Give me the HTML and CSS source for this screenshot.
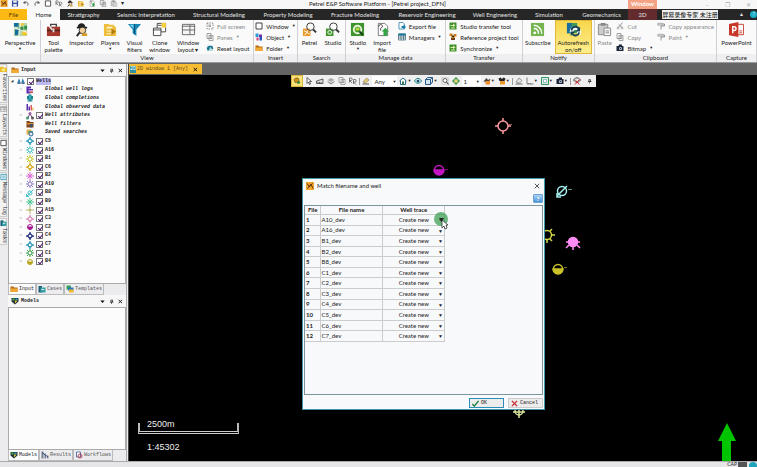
FILE: index.html
```html
<!DOCTYPE html>
<html lang="en">
<head>
    <meta charset="UTF-8">
    <meta name="viewport" content="width=device-width, initial-scale=1.0">
    <title>Petrel E&amp;P Software Platform - [Petrel project_DFN]</title>
    <link rel="stylesheet" href="styles.css">
</head>
<body>
    <svg class="sprite" aria-hidden="true">
        <!-- ribbon -->
        <symbol id="i-persp" viewBox="0 0 16 16"><path fill="#b9d7a0" d="M1 1h14v14H1z"/><path fill="#176f9d" d="M1 1h5v4H1zM2 8h4v6H2z"/><path fill="#f3c62f" d="M7 1h4v3H7zM10 10h5v4h-5z"/><path fill="#2e8b4c" d="M6 5h5v4H6zM12 4h3v4h-3z"/><path stroke="#fff" d="M1 6l14 5M8 1l-2 14"/></symbol>
        <symbol id="i-tool" viewBox="0 0 16 16"><path fill="none" stroke="#444" stroke-width="1.5" d="M5 5V2.500h6V5"/><rect x="1" y="5" width="14" height="10" fill="#a8382d"/><path fill="#5b2520" d="M1 8h14v2H1z"/><path fill="#ddd" d="M7 7h2v4H7zM3 5l3 4 1-1-2-4z"/></symbol>
        <symbol id="i-insp" viewBox="0 0 16 16"><path fill="#222" d="M4 5c0-5 8-5 8 0h2v2H3V5z"/><circle cx="9" cy="9" r="3.500" fill="#f1cf9b" stroke="#333"/><path stroke="#222" stroke-width="2" d="M6 11l-3 4"/><path fill="#d49c22" d="M9 12h5v3H8z"/></symbol>
        <symbol id="i-play" viewBox="0 0 16 16"><path fill="#eebd3b" d="M1 2h5l1 1h4l3 3v9H1z"/><path fill="#fff3c9" d="M4 5h6v2H4zM4 9h7v1H4zM4 12h7v1H4z"/><path fill="#b37b10" d="M9 7l5 3-5 4z"/></symbol>
        <symbol id="i-filter" viewBox="0 0 16 16"><path fill="#1688b5" d="M1 2h14l-5 6v7l-4-3V8z"/><path fill="#7bd0e8" d="M3 3h4v4z"/><path stroke="#0a4d72" d="M8 2v11"/></symbol>
        <symbol id="i-clone" viewBox="0 0 16 16"><path fill="#fff" stroke="#444" d="M5.500 1.500h9v9h-9z"/><path fill="#f3d03e" d="M10 1h5v5h-5z"/><path fill="#fff" stroke="#444" d="M1.500 6.500h8v8h-8z"/><path stroke="#444" d="M1 8.500h9M6 3.500h4"/></symbol>
        <symbol id="i-layout" viewBox="0 0 16 16"><path fill="#f6f6f6" stroke="#666" d="M1.500 2.500h13v11h-13zM1 8.500h14M9.500 3v10M1 4.500h14"/></symbol>
        <symbol id="i-full" viewBox="0 0 16 16"><path fill="none" stroke="#666" stroke-width="1.500" stroke-dasharray="3 2" d="M2 2h12v12H2z"/><path fill="#aaa" d="M5 5h5v5H5z"/></symbol>
        <symbol id="i-reset" viewBox="0 0 16 16"><path fill="#b8dbe0" d="M2 3h12v11H2z"/><path fill="none" stroke="#14708c" stroke-width="3" d="M4 10c0-7 9-7 9 0"/><path fill="#14708c" d="M1 7l7 1-4 6z"/></symbol>
        <symbol id="i-win" viewBox="0 0 16 16"><path fill="#fff" stroke="#444" stroke-width="2" d="M2 2h12v12H2z"/></symbol>
        <symbol id="i-obj" viewBox="0 0 16 16"><path fill="#2e9bd6" d="M1 1h6v7H1z"/><path fill="#6d33a8" d="M8 3h6v5H8z"/><path fill="#d83b7d" d="M3 9h4v6H3z"/><path fill="#2457b5" d="M9 8h5v7H9z"/></symbol>
        <symbol id="i-folder" viewBox="0 0 16 16"><path fill="#b46a14" d="M1 3h6l1 2h7v9H1z"/><path fill="#f3aa35" d="M1 7h14v7H1z"/></symbol>
        <symbol id="i-search" viewBox="0 0 16 16"><path fill="#eb972b" d="M1 7h8v8H1z"/><path stroke="#fff" d="M2 9l6 4M7 8l-4 6"/><circle cx="9" cy="5" r="4" fill="#fff" fill-opacity=".5" stroke="#333"/><path stroke="#333" stroke-width="2" d="M12 8l3 3"/></symbol>
        <symbol id="i-ssearch" viewBox="0 0 16 16"><path fill="#44962f" d="M1 7h8v8H1z"/><circle cx="5" cy="11" r="2" fill="none" stroke="#fff"/><circle cx="9" cy="5" r="4" fill="#fff" fill-opacity=".5" stroke="#333"/><path stroke="#333" stroke-width="2" d="M12 8l3 3"/></symbol>
        <symbol id="i-studio" viewBox="0 0 16 16"><rect x="1" y="1" width="14" height="14" fill="#3f942f"/><circle cx="8" cy="8" r="4" fill="none" stroke="#e9f5d8" stroke-width="2"/><path stroke="#173d13" stroke-width="2" d="M10 10l4 4"/><path fill="#b9da42" d="M6 6h4v3H6z"/></symbol>
        <symbol id="i-import" viewBox="0 0 16 16"><path fill="#fff" stroke="#777" d="M3.500 1.500h7l3 3v10h-10z"/><path fill="#37a447" d="M11 6l4 4h-2v5H9v-5H7z"/><path fill="none" stroke="#333" d="M4 5c0-3 4-3 4 0L6 7v2"/></symbol>
        <symbol id="i-export" viewBox="0 0 16 16"><path fill="#fff" stroke="#257aa0" stroke-width="1.500" d="M2 1h8l3 3v10H2z"/><path fill="#197fae" d="M7 8h4V5l5 5-5 5v-3H7z"/></symbol>
        <symbol id="i-table" viewBox="0 0 16 16"><path fill="#fff" stroke="#3b6776" stroke-width="1.500" d="M1 2h14v12H1zM1 6h14M1 10h14M6 2v12M11 2v12"/><path fill="#18799a" d="M1 1h14v4H1z"/></symbol>
        <symbol id="i-green" viewBox="0 0 16 16"><rect x="1" y="1" width="14" height="14" fill="#418f2e"/><path fill="#dcefa6" d="M3 6h5V3l5 4-5 3V8H3zM4 11h8v2H4z"/></symbol>
        <symbol id="i-ref" viewBox="0 0 16 16"><path fill="#cf7d20" d="M1 1h6v5H1zM9 2h6v5H9z"/><path fill="#713b1c" d="M4 9h8v5H4z"/><path stroke="#d99a27" stroke-width="2" d="M4 5l4 5 4-4"/></symbol>
        <symbol id="i-rss" viewBox="0 0 16 16"><rect x="1" y="1" width="14" height="14" fill="#74b551"/><circle cx="5" cy="11.500" r="1.500" fill="#fff"/><path fill="none" stroke="#fff" stroke-width="1.500" d="M4 7c3 0 5 2 5 5.500M4 3.500c5 0 8.500 4 8.500 9"/></symbol>
        <symbol id="i-refresh" viewBox="0 0 16 16"><rect x="1" y="1" width="11" height="11" fill="#3e9a54"/><path fill="#196fa0" d="M1 1h5v11H1z"/><path fill="none" stroke="#fff" stroke-width="4" d="M6 11a4 4 0 1 1 7 2"/><path fill="none" stroke="#164355" stroke-width="2" d="M6 9a4 4 0 0 1 8 0M14 11a4 4 0 0 1-7 2"/><path fill="#164355" d="M15 5v5h-5zM5 15v-5h5z"/></symbol>
        <symbol id="i-paste" viewBox="0 0 16 16"><path fill="#ccc" stroke="#888" d="M1.500 2.500h10v11h-10z"/><path fill="#888" d="M4 1h5v3H4z"/><path fill="#f8f8f8" stroke="#888" d="M7.500 6.500h7v8h-7zM9 9.500h4M9 11.500h4"/></symbol>
        <symbol id="i-cut" viewBox="0 0 16 16"><path fill="none" stroke="#777" stroke-width="1.500" d="M13 1L5 11M6 5l6 6"/><circle cx="4" cy="12" r="2" fill="none" stroke="#777"/><circle cx="12" cy="12" r="2" fill="none" stroke="#777"/></symbol>
        <symbol id="i-copy" viewBox="0 0 16 16"><path fill="#f5f5f5" stroke="#888" stroke-width="1.500" d="M2 1h8v10H2zM6 5h8v10H6zM8 8h4M8 11h4"/></symbol>
        <symbol id="i-camera" viewBox="0 0 16 16"><path fill="#1b2438" d="M1 4h4l1-3h6v3h3v10H1z"/><circle cx="9" cy="9" r="3" fill="#d7e5f2"/><circle cx="9" cy="9" r="1.500" fill="#1b2438"/></symbol>
        <symbol id="i-brush" viewBox="0 0 16 16"><path fill="#ccc" stroke="#888" d="M1.500 2.500h11v4h-11z"/><path fill="none" stroke="#777" stroke-width="1.500" d="M13 4h2v4H8v7"/></symbol>
        <symbol id="i-ppt" viewBox="0 0 16 16"><path fill="#fff" stroke="#c84132" d="M7.500 2.500h8v11h-8z"/><path fill="#c83828" d="M0 2l10-2v16L0 14z"/><path fill="none" stroke="#fff" stroke-width="1.500" d="M4 12V5h1.500a2 2 0 0 1 0 4H4"/><path stroke="#c84132" d="M11 9.500h3M11 11.500h3"/></symbol>
        <!-- small bits -->
        <symbol id="i-petrel" viewBox="0 0 16 16"><rect width="16" height="16" fill="#f1a32c"/><path fill="none" stroke="#5d3511" stroke-width="2" d="M2 3l5 7 3-6 4 9M3 13l4-5 6-5"/></symbol>
        <symbol id="i-save" viewBox="0 0 16 16"><path fill="#344f9d" d="M1 1h13l1 2v12H1z"/><path fill="#eee" d="M4 1h8v5H4zM4 9h8v6H4z"/></symbol>
        <symbol id="i-undo" viewBox="0 0 16 16"><path fill="none" stroke="#555" stroke-width="2" d="M3 6c8-4 11 1 9 7"/><path fill="#555" d="M1 7l5-5 1 7z"/></symbol>
        <symbol id="i-redo" viewBox="0 0 16 16"><path fill="none" stroke="#555" stroke-width="2" d="M13 6C5 2 2 7 4 13"/><path fill="#555" d="M15 7l-5-5-1 7z"/></symbol>
        <symbol id="i-pin" viewBox="0 0 16 16"><path fill="#222" d="M5 2h7v7h2v2H9v5H7v-5H3V9h2z"/><path fill="#eee" d="M7 4h2v5H7z"/></symbol>
        <symbol id="i-x" viewBox="0 0 16 16"><path stroke="#111" stroke-width="3" d="M2 3l11 10M13 3L2 13"/></symbol>
        <symbol id="i-thinx" viewBox="0 0 16 16"><path stroke="currentColor" stroke-width="2" d="M2 2l12 12M14 2L2 14"/></symbol>
        <symbol id="i-down" viewBox="0 0 16 16"><path fill="#111" d="M1 5h14l-7 8z"/></symbol>
        <!-- tree -->
        <symbol id="i-wells" viewBox="0 0 20 16"><path fill="#2a7fb4" d="M5 1l4 11H1zM14 1l5 11h-8z"/><path fill="#173f7c" d="M1 12h8v3H1zM11 12h8v3h-8z"/></symbol>
        <symbol id="i-logs" viewBox="0 0 16 16"><path fill="#5b2bb0" d="M1 1h4v14H1zM5 1h5v4H5zM5 6h9v3H5zM5 11h4v4H5z"/><path fill="#d4443d" d="M7 11h7v3H7z"/></symbol>
        <symbol id="i-comp" viewBox="0 0 16 16"><path fill="#188494" d="M5 1h6v3h3v7h-3v2h2v2H3v-2h2v-2H2V4h3z"/><path fill="#51c4cd" d="M7 3h2v8H7z"/></symbol>
        <symbol id="i-obs" viewBox="0 0 16 16"><path fill="#5b33a8" d="M1 2h3v13H1zM5 7h3v8H5z"/><path fill="#dd5b68" d="M9 4h3v11H9z"/><path fill="#e9a62d" d="M13 9h2v6h-2z"/></symbol>
        <symbol id="i-attr" viewBox="0 0 16 16"><path fill="none" stroke="#6a4d7c" stroke-width="2" d="M3 13L8 3l5 10"/><circle cx="8" cy="3" r="3" fill="#9b59a8"/><circle cx="3" cy="12" r="3" fill="#40946e"/><circle cx="13" cy="12" r="3" fill="#555"/></symbol>
        <symbol id="i-wfil" viewBox="0 0 16 16"><path fill="#82431f" d="M1 2h6l1 2h7v11H1z"/><path fill="#d79337" d="M1 6h14v3H1z"/><path fill="#35547d" d="M7 8h8l-3 4v3H9v-3z"/></symbol>
        <symbol id="i-saved" viewBox="0 0 16 16"><path fill="#e5b04a" d="M1 1h10v10H1z"/><path fill="#4a9f8a" d="M4 4h10v3H4z"/><circle cx="10" cy="10" r="4" fill="#dff1fa" stroke="#315f8a" stroke-width="2"/></symbol>
        <symbol id="w-diamond" viewBox="0 0 16 16"><path fill="none" stroke="currentColor" stroke-width="2.500" d="M8 3l5 5-5 5-5-5zM8 0v3M8 13v3M0 8h3M13 8h3"/></symbol>
        <symbol id="w-ring" viewBox="0 0 16 16"><circle cx="8" cy="8" r="4" fill="none" stroke="currentColor" stroke-width="2"/><path stroke="currentColor" stroke-width="2" d="M8 0v4M8 12v4M0 8h4M12 8h4M2 2l3 3M14 2l-3 3M2 14l3-3M14 14l-3-3"/></symbol>
        <symbol id="w-star" viewBox="0 0 16 16"><path stroke="currentColor" stroke-width="2" d="M8 0v16M0 8h16M3 3l10 10M13 3L3 13"/></symbol>
        <symbol id="w-half" viewBox="0 0 16 16"><circle cx="8" cy="8" r="5" fill="#fff" fill-opacity=".5" stroke="currentColor" stroke-width="2"/><path fill="currentColor" d="M3 7h10a5 6 0 0 1-10 0z"/></symbol>
        <symbol id="w-slash" viewBox="0 0 16 16"><circle cx="8" cy="8" r="4" fill="none" stroke="currentColor" stroke-width="2"/><path stroke="currentColor" stroke-width="2" d="M1 15L15 1M1 10v5h5"/></symbol>
        <symbol id="w-cross" viewBox="0 0 16 16"><path stroke="currentColor" stroke-width="2" d="M8 0v16M0 8h16"/><circle cx="8" cy="8" r="2" fill="currentColor"/></symbol>
        <symbol id="i-models" viewBox="0 0 16 16"><path fill="#20343a" d="M1 2h14v7l-7 6-7-6z"/><path fill="#4db34a" d="M3 3h4v4H3z"/><path fill="#e5ce36" d="M8 7h5l-5 6z"/><path fill="#2b9bc5" d="M9 3h4v3H9z"/></symbol>
        <symbol id="i-cases" viewBox="0 0 16 16"><path fill="#235f78" d="M1 2h7v13H1z"/><path fill="#36a1a6" d="M5 5h10v10H5z"/><path fill="#e0efea" d="M7 8h5v2H7z"/></symbol>
        <symbol id="i-templ" viewBox="0 0 16 16"><path fill="#35a355" d="M1 1h9v8H1z"/><path fill="#2678bb" d="M4 5h11v6H4z"/><path fill="#efb629" d="M6 9h9v6H6z"/></symbol>
        <symbol id="i-results" viewBox="0 0 16 16"><path fill="#7a7f94" d="M1 1h4v14H1zM7 5h3v10H7zM12 9h3v6h-3z"/><path stroke="#3a517f" stroke-width="2" d="M2 3l12 9"/></symbol>
        <symbol id="i-flow" viewBox="0 0 16 16"><path fill="#fff" stroke="#5679a5" stroke-width="2" d="M3 2h8v10H3z"/><circle cx="10" cy="10" r="4" fill="none" stroke="#c23d55" stroke-width="2"/></symbol>
        <symbol id="i-note" viewBox="0 0 16 16"><path fill="#fff" stroke="#3b9cb5" stroke-width="2" d="M2 2h12v12H2zM5 6h6M5 10h6"/></symbol>
        <symbol id="i-favs" viewBox="0 0 16 16"><path fill="#e9bd2c" d="M0 3h7l2 2h7v10H0z"/><path fill="#fff2a2" d="M8 5l1 3h4l-3 2 1 4-3-2-3 2 1-4-3-2h4z"/></symbol>
        <!-- view toolbar -->
        <symbol id="i-hand" viewBox="0 0 16 16"><path fill="#d68d16" stroke="#3d3a14" d="M2 5l3-3h5l2 4v5H4z"/><path fill="#2f8b35" d="M8 9h3V7l4 4-4 4v-2H8z"/></symbol>
        <symbol id="i-arrow" viewBox="0 0 16 16"><path fill="#fff" stroke="#333" stroke-width="1.500" d="M4 1v12l3-3 2 5 2-1-2-5h4z"/></symbol>
        <symbol id="i-ruler" viewBox="0 0 16 16"><path fill="#ddd" stroke="#333" stroke-width="1.500" d="M1 13V8l13-4v9zM4 12v-2M7 12v-2M10 12v-2"/></symbol>
        <symbol id="i-cloud" viewBox="0 0 16 16"><path fill="#aaa" d="M1 6l7-4 7 4-7 4z"/><path fill="#888" d="M1 8l7 4 7-4v2l-7 5-7-5z"/></symbol>
        <symbol id="i-rr" viewBox="0 0 16 16"><path fill="none" stroke="#555" stroke-width="1.500" d="M1 11V2h3a2 2 0 0 1 0 5H1l5 5M9 14V5h3a2 2 0 0 1 0 5H9l5 5"/></symbol>
        <symbol id="i-pick" viewBox="0 0 16 16"><path fill="#e8ca70" stroke="#665a3e" d="M2 10l7-8 5 4-7 6z"/><path stroke="#555" stroke-width="2" d="M1 14h13"/></symbol>
        <symbol id="i-edit" viewBox="0 0 16 16"><path fill="#e4e4e4" stroke="#777" stroke-width="1.500" d="M2 10l6-8 6 5-5 5z"/><path stroke="#666" stroke-width="2" d="M1 14h14"/></symbol>
        <symbol id="i-home" viewBox="0 0 16 16"><path fill="#fff" stroke="#266b83" stroke-width="2" d="M1 8l7-6 7 6M3 7v8h10V7"/><path fill="#3b7d57" d="M6 9h4v6H6z"/></symbol>
        <symbol id="i-eye" viewBox="0 0 16 16"><path fill="#fff" stroke="#137d80" stroke-width="2" d="M1 8c4-7 10-7 14 0-4 6-10 6-14 0z"/><circle cx="8" cy="8" r="3" fill="#174c6b"/></symbol>
        <symbol id="i-cube" viewBox="0 0 16 16"><path fill="#d5e7f2" stroke="#285884" stroke-width="2" d="M1 5h10v10H1zM1 5l4-4h10l-4 4M15 1v9l-4 5"/></symbol>
        <symbol id="i-zoom" viewBox="0 0 16 16"><path fill="none" stroke="#888" stroke-dasharray="2 1" d="M1.500 1.500h13v13h-13z"/><circle cx="8" cy="7" r="4" fill="#fff" stroke="#333" stroke-width="1.500"/><path stroke="#333" stroke-width="2" d="M11 10l4 5"/></symbol>
        <symbol id="i-target" viewBox="0 0 16 16"><circle cx="8" cy="8" r="5" fill="#e7edbe" stroke="#3a8b3f" stroke-width="2"/><path stroke="#3a8b3f" stroke-width="2" d="M8 0v5M8 11v5M0 8h5M11 8h5"/><circle cx="8" cy="8" r="2" fill="#f1bd30"/></symbol>
        <symbol id="i-bird" viewBox="0 0 16 16"><path fill="#4b4136" d="M1 9l6-7 3 4 5-3-3 8z"/><path fill="#ed8d2d" d="M5 8h9v7H5z"/></symbol>
        <symbol id="i-mask" viewBox="0 0 16 16"><path fill="#222" d="M1 3l4-2 3 3 3-3 4 2-2 5H3z"/><path fill="#ed982f" d="M4 8h10v7H4z"/></symbol>
        <symbol id="i-axis" viewBox="0 0 16 16"><path fill="none" stroke="#555" stroke-width="1.500" d="M2 1v13h13M5 12v2M9 12v2"/></symbol>
        <symbol id="i-frame" viewBox="0 0 16 16"><path fill="#dff1e3" stroke="#329162" stroke-width="2" d="M1 1h14v14H1z"/><path fill="#fff" stroke="#357e9b" d="M5 5h6v6H5z"/></symbol>
        <symbol id="i-off" viewBox="0 0 16 16"><path fill="#ddd" stroke="#555" stroke-width="2" d="M1 6c4-6 10-6 14 0-4 6-10 6-14 0z"/><path stroke="#c33" stroke-width="2" d="M4 15l9-10M5 7l8 8"/></symbol>
    </svg>

    <div class="app">
        <header class="titlebar">
            <div class="quick">
                <svg class="ic"><use href="#i-petrel"/></svg>
                <svg class="ic"><use href="#i-save"/></svg>
                <svg class="ic"><use href="#i-undo"/></svg>
                <svg class="ic"><use href="#i-redo"/></svg>
                <svg class="ic"><use href="#i-win"/></svg>
                <svg class="ic"><use href="#i-rr"/></svg>
                <svg class="ic"><use href="#i-insp"/></svg>
                <svg class="ic"><use href="#i-play"/></svg>
                <svg class="ic"><use href="#i-import"/></svg>
                <svg class="ic"><use href="#i-copy"/></svg>
                <svg class="ic"><use href="#i-paste"/></svg>
                <span>▾</span>
            </div>
            <h1>Petrel E&amp;P Software Platform - [Petrel project_DFN]</h1>
            <span class="context">Window</span>
            <div class="win-btns"><button aria-label="Minimize">–</button><button aria-label="Restore">❐</button><button aria-label="Close">✕</button></div>
        </header>

        <nav class="tabs">
            <a href="#" class="file">File</a>
            <a href="#" class="active">Home</a>
            <a href="#">Stratigraphy</a>
            <a href="#">Seismic Interpretation</a>
            <a href="#">Structural Modeling</a>
            <a href="#">Property Modeling</a>
            <a href="#">Fracture Modeling</a>
            <a href="#">Reservoir Engineering</a>
            <a href="#">Well Engineering</a>
            <a href="#">Simulation</a>
            <a href="#">Geomechanics</a>
            <a href="#" class="red">2D</a>
            <span class="stamp"><b>屏幕录像专家 未注册</b></span>
            <span class="tab-end">▲<i>?</i></span>
        </nav>

        <section class="ribbon">
            <div class="group">
                <div class="tools"><button class="big"><svg><use href="#i-persp"/></svg>Perspective<small>▼</small></button></div>
                <h2></h2>
            </div>
            <div class="group">
                <div class="tools">
                    <button class="big"><svg><use href="#i-tool"/></svg>Tool<br>palette</button>
                    <button class="big"><svg><use href="#i-insp"/></svg>Inspector</button>
                    <button class="big"><svg><use href="#i-play"/></svg>Players<small>▼</small></button>
                    <button class="big"><svg><use href="#i-filter"/></svg>Visual<br>filters</button>
                    <button class="big"><svg><use href="#i-clone"/></svg>Clone<br>window</button>
                    <button class="big"><svg><use href="#i-layout"/></svg>Window<br>layout ▾</button>
                    <div class="list">
                        <button class="dim"><svg><use href="#i-full"/></svg>Full screen</button>
                        <button class="dim"><svg><use href="#i-copy"/></svg>Panes<small>▼</small></button>
                        <button><svg><use href="#i-reset"/></svg>Reset layout</button>
                    </div>
                </div>
                <h2>View</h2>
            </div>
            <div class="group">
                <div class="tools"><div class="list">
                    <button><svg><use href="#i-win"/></svg>Window<small>▼</small></button>
                    <button><svg><use href="#i-obj"/></svg>Object<small>▼</small></button>
                    <button><svg><use href="#i-folder"/></svg>Folder<small>▼</small></button>
                </div></div>
                <h2>Insert</h2>
            </div>
            <div class="group">
                <div class="tools">
                    <button class="big"><svg><use href="#i-search"/></svg>Petrel</button>
                    <button class="big"><svg><use href="#i-ssearch"/></svg>Studio</button>
                </div>
                <h2>Search</h2>
            </div>
            <div class="group">
                <div class="tools">
                    <button class="big"><svg><use href="#i-studio"/></svg>Studio<small>▼</small></button>
                    <button class="big"><svg><use href="#i-import"/></svg>Import<br>file</button>
                    <div class="list">
                        <button><svg><use href="#i-export"/></svg>Export file</button>
                        <button><svg><use href="#i-table"/></svg>Managers<small>▼</small></button>
                    </div>
                </div>
                <h2>Manage data</h2>
            </div>
            <div class="group">
                <div class="tools"><div class="list">
                    <button><svg><use href="#i-green"/></svg>Studio transfer tool</button>
                    <button><svg><use href="#i-ref"/></svg>Reference project tool</button>
                    <button><svg><use href="#i-green"/></svg>Synchronize<small>▼</small></button>
                </div></div>
                <h2>Transfer</h2>
            </div>
            <div class="group">
                <div class="tools">
                    <button class="big"><svg><use href="#i-rss"/></svg>Subscribe</button>
                    <button class="big on"><svg><use href="#i-refresh"/></svg>Autorefresh<br>on/off</button>
                </div>
                <h2>Notify</h2>
            </div>
            <div class="group">
                <div class="tools">
                    <button class="big dim"><svg><use href="#i-paste"/></svg>Paste</button>
                    <div class="list">
                        <button class="dim"><svg><use href="#i-cut"/></svg>Cut</button>
                        <button class="dim"><svg><use href="#i-copy"/></svg>Copy</button>
                        <button><svg><use href="#i-camera"/></svg>Bitmap<small>▼</small></button>
                    </div>
                    <div class="list">
                        <button class="dim"><svg><use href="#i-brush"/></svg>Copy appearance</button>
                        <button class="dim"><svg><use href="#i-brush"/></svg>Paint<small>▼</small></button>
                    </div>
                </div>
                <h2>Clipboard</h2>
            </div>
            <div class="group">
                <div class="tools"><button class="big"><svg><use href="#i-ppt"/></svg>PowerPoint</button></div>
                <h2>Capture</h2>
            </div>
        </section>

        <main class="work">
            <nav class="side">
                <a href="#"><svg class="ic"><use href="#i-favs"/></svg>Favorites</a>
                <a href="#"><svg class="ic"><use href="#i-layout"/></svg>Layouts</a>
                <a href="#"><svg class="ic"><use href="#i-win"/></svg>Windows</a>
                <a href="#"><svg class="ic"><use href="#i-note"/></svg>Message log</a>
                <a href="#"><svg class="ic"><use href="#i-cases"/></svg>Tasks</a>
            </nav>

            <div class="panels">
                <section class="panel input">
                    <h3><svg class="ic"><use href="#i-folder"/></svg>Input<span><svg><use href="#i-down"/></svg><svg><use href="#i-pin"/></svg><svg><use href="#i-x"/></svg></span></h3>
                    <div class="box">
                        <ul class="tree">
                            <li class="root"><i>◢</i><svg class="ic"><use href="#i-wells"/></svg><label><input type="checkbox" checked><b>Wells</b></label></li>
                            <li class="it"><i>▷</i><svg class="ic"><use href="#i-logs"/></svg><span>Global well logs</span></li>
                            <li class="it"><i></i><svg class="ic"><use href="#i-comp"/></svg><span>Global completions</span></li>
                            <li class="it"><i></i><svg class="ic"><use href="#i-obs"/></svg><span>Global observed data</span></li>
                            <li class="it"><i>▷</i><svg class="ic"><use href="#i-attr"/></svg><label><input type="checkbox" checked>Well attributes</label></li>
                            <li class="it"><i></i><svg class="ic"><use href="#i-wfil"/></svg><span>Well filters</span></li>
                            <li class="it"><i></i><svg class="ic"><use href="#i-saved"/></svg><span>Saved searches</span></li>
                            <li><i>▷</i><svg class="ic cyan"><use href="#w-diamond"/></svg><label><input type="checkbox" checked>C5</label></li>
                            <li><i>▷</i><svg class="ic aqua"><use href="#w-ring"/></svg><label><input type="checkbox" checked>A16</label></li>
                            <li><i>▷</i><svg class="ic lime"><use href="#w-ring"/></svg><label><input type="checkbox" checked>B1</label></li>
                            <li><i>▷</i><svg class="ic gold"><use href="#w-diamond"/></svg><label><input type="checkbox" checked>C6</label></li>
                            <li><i>▷</i><svg class="ic orchid"><use href="#w-star"/></svg><label><input type="checkbox" checked>B2</label></li>
                            <li><i>▷</i><svg class="ic violet"><use href="#w-ring"/></svg><label><input type="checkbox" checked>A10</label></li>
                            <li><i>▷</i><svg class="ic aqua"><use href="#w-slash"/></svg><label><input type="checkbox" checked>B8</label></li>
                            <li><i>▷</i><svg class="ic mint"><use href="#w-star"/></svg><label><input type="checkbox" checked>B9</label></li>
                            <li><i>▷</i><svg class="ic khaki"><use href="#w-cross"/></svg><label><input type="checkbox" checked>A15</label></li>
                            <li><i>▷</i><svg class="ic pink"><use href="#w-diamond"/></svg><label><input type="checkbox" checked>C3</label></li>
                            <li><i>▷</i><svg class="ic magenta"><use href="#w-half"/></svg><label><input type="checkbox" checked>C2</label></li>
                            <li><i>▷</i><svg class="ic navy"><use href="#w-diamond"/></svg><label><input type="checkbox" checked>C4</label></li>
                            <li><i>▷</i><svg class="ic cyan"><use href="#w-diamond"/></svg><label><input type="checkbox" checked>C7</label></li>
                            <li><i>▷</i><svg class="ic green"><use href="#w-ring"/></svg><label><input type="checkbox" checked>C1</label></li>
                            <li><i>▷</i><svg class="ic olive"><use href="#w-half"/></svg><label><input type="checkbox" checked>B4</label></li>
                        </ul>
                    </div>
                    <nav class="foot"><a href="#" class="active"><svg class="ic"><use href="#i-folder"/></svg>Input</a><a href="#"><svg class="ic"><use href="#i-cases"/></svg>Cases</a><a href="#"><svg class="ic"><use href="#i-templ"/></svg>Templates</a></nav>
                </section>
                <section class="panel models">
                    <h3><svg class="ic"><use href="#i-models"/></svg>Models<span><svg><use href="#i-down"/></svg><svg><use href="#i-pin"/></svg><svg><use href="#i-x"/></svg></span></h3>
                    <div class="box"></div>
                    <nav class="foot"><a href="#" class="active"><svg class="ic"><use href="#i-models"/></svg>Models</a><a href="#"><svg class="ic"><use href="#i-results"/></svg>Results</a><a href="#"><svg class="ic"><use href="#i-flow"/></svg>Workflows</a></nav>
                </section>
            </div>

            <div class="view">
                <div class="view-tabs"><a href="#"><em>2D</em>2D window 1 [Any]<svg><use href="#i-x"/></svg></a></div>
                <div class="canvas">
                    <svg class="map">
                        <g fill="none" stroke-width="1.500">
                            <g stroke="#ff9aa0"><circle cx="374" cy="51" r="5"/><path d="M374 43v3M374 56v3M366 51h3M379 51h3"/><path stroke-width="1" stroke-opacity=".6" d="M380 49.500h3"/></g>
                            <g stroke="#c414c4"><circle cx="310" cy="95" r="4.500"/><path fill="#c414c4" d="M305 95h10a5 5 0 0 1-10 0z"/><path stroke-width="1" stroke-opacity=".6" d="M316 94.500h3"/></g>
                            <g stroke="#a5eef0"><circle cx="433" cy="116" r="4.500"/><path d="M428 121l10-10M428 118v4h4"/><path stroke-width="1" stroke-opacity=".6" d="M439 114.500h4"/></g>
                            <g stroke="#d3d64a"><circle cx="418" cy="160" r="4.500"/><path d="M421 156l2-2M423 160h3M421 164l2 2M418 165v3"/></g>
                            <g stroke="#ff8cf5"><circle cx="444" cy="167" r="4.500" fill="#ff8cf5"/><path d="M437 167h14M444 171v4M440 170l-3 3M448 170l3 3"/></g>
                            <g stroke="#c9c128"><circle cx="429" cy="194" r="4.500"/><path fill="#c9c128" d="M424 194h10a5 5 0 0 1-10 0z"/><path stroke-width="1" stroke-opacity=".6" d="M435 192.500h3"/></g>
                            <g stroke="#dbe59c"><circle cx="390" cy="336" r="4"/><path d="M390 332v11M384 337h12"/></g>
                        </g>
                    </svg>
                    <div class="toolbar">
                        <button class="on" aria-label="Pan"><svg><use href="#i-hand"/></svg></button>
                        <button aria-label="Select"><svg><use href="#i-arrow"/></svg></button>
                        <button aria-label="Measure"><svg><use href="#i-ruler"/></svg></button>
                        <button aria-label="Surface"><svg><use href="#i-cloud"/></svg></button>
                        <button aria-label="Copy"><svg><use href="#i-copy"/></svg></button>
                        <button aria-label="Rotate"><svg><use href="#i-rr"/></svg></button>
                        <hr>
                        <button aria-label="Pick"><svg><use href="#i-pick"/></svg></button>
                        <div class="combo"><select aria-label="Domain"><option>Any</option></select></div>
                        <button aria-label="Home view"><svg><use href="#i-home"/></svg><small>▼</small></button>
                        <button aria-label="View all"><svg><use href="#i-eye"/></svg></button>
                        <button aria-label="Projection"><svg><use href="#i-cube"/></svg><small>▼</small></button>
                        <button aria-label="Zoom"><svg><use href="#i-zoom"/></svg></button>
                        <button aria-label="Center"><svg><use href="#i-target"/></svg></button>
                        <div class="combo"><select aria-label="Scale" class="short"><option>1</option></select></div>
                        <button aria-label="Flight"><svg><use href="#i-bird"/></svg><small>▼</small></button>
                        <button aria-label="Mask"><svg><use href="#i-mask"/></svg><small>▼</small></button>
                        <hr>
                        <button aria-label="Edit"><svg><use href="#i-edit"/></svg></button>
                        <button aria-label="Axis"><svg><use href="#i-axis"/></svg><small>▼</small></button>
                        <button aria-label="Frame"><svg><use href="#i-frame"/></svg><small>▼</small></button>
                        <button aria-label="Snapshot"><svg><use href="#i-camera"/></svg><small>▼</small></button>
                        <hr>
                        <button aria-label="Hide"><svg><use href="#i-off"/></svg></button>
                        <button aria-label="Pin" class="last"><svg><use href="#i-pin"/></svg></button>
                    </div>

                    <div class="scale"><p>2500m</p><div class="bar"></div><p>1:45302</p></div>
                    <svg class="north" viewBox="0 0 18 38"><path fill="#00c400" d="M9 0l9 18h-5v20H4V18H0z"/></svg>

                    <form class="dialog" role="dialog" aria-labelledby="dlg-title">
                        <header><svg class="ic"><use href="#i-petrel"/></svg><h4 id="dlg-title">Match filename and well</h4><button type="button" aria-label="Close"><svg><use href="#i-thinx"/></svg></button></header>
                        <div class="help"><button type="button">?</button></div>
                        <div class="grid">
                            <table>
                                <thead><tr><th>File</th><th>File name</th><th>Well trace</th></tr></thead>
                                <tbody>
                                    <tr><th>1</th><td>A10_dev</td><td><select aria-label="Well trace 1"><option>Create new</option></select></td></tr>
                                    <tr><th>2</th><td>A16_dev</td><td><select aria-label="Well trace 2"><option>Create new</option></select></td></tr>
                                    <tr><th>3</th><td>B1_dev</td><td><select aria-label="Well trace 3"><option>Create new</option></select></td></tr>
                                    <tr><th>4</th><td>B2_dev</td><td><select aria-label="Well trace 4"><option>Create new</option></select></td></tr>
                                    <tr><th>5</th><td>B8_dev</td><td><select aria-label="Well trace 5"><option>Create new</option></select></td></tr>
                                    <tr><th>6</th><td>C1_dev</td><td><select aria-label="Well trace 6"><option>Create new</option></select></td></tr>
                                    <tr><th>7</th><td>C2_dev</td><td><select aria-label="Well trace 7"><option>Create new</option></select></td></tr>
                                    <tr><th>8</th><td>C3_dev</td><td><select aria-label="Well trace 8"><option>Create new</option></select></td></tr>
                                    <tr><th>9</th><td>C4_dev</td><td><select aria-label="Well trace 9"><option>Create new</option></select></td></tr>
                                    <tr><th>10</th><td>C5_dev</td><td><select aria-label="Well trace 10"><option>Create new</option></select></td></tr>
                                    <tr><th>11</th><td>C6_dev</td><td><select aria-label="Well trace 11"><option>Create new</option></select></td></tr>
                                    <tr><th>12</th><td>C7_dev</td><td><select aria-label="Well trace 12"><option>Create new</option></select></td></tr>
                                </tbody>
                            </table>
                        </div>
                        <footer>
                            <button type="button" class="ok"><svg viewBox="0 0 16 16"><path fill="none" stroke="#16803a" stroke-width="3" d="M1 9l4 5L15 2"/></svg>OK</button>
                            <button type="button"><svg viewBox="0 0 16 16"><path stroke="#c8242c" stroke-width="3" d="M2 2l12 12M14 2L2 14"/></svg>Cancel</button>
                        </footer>
                        <svg class="pointer" viewBox="0 0 16 18"><circle cx="7" cy="7" r="7" fill="#3fa055" fill-opacity=".75"/><path fill="#222" d="M5 6h5l-2.500 4z"/><path fill="#fff" stroke="#333" stroke-width=".8" d="M8 8v8l2-2 1 3 2-1-1-3h2z"/></svg>
                    </form>
                </div>
            </div>
        </main>

        <footer class="status"><span>CAP</span><b></b><i></i></footer>
    </div>
</body>
</html>
```
FILE: styles.css
```css
* {
    margin: 0;
    padding: 0;
    box-sizing: border-box;
}

html, body {
    height: 100%;
}

body {
    font-family: Lato, sans-serif;
    font-size: 6px;
    line-height: 7px;
    color: #222;
    overflow: hidden;
}

button, select, input {
    font: inherit;
    color: inherit;
    border: none;
    background: none;
}

a {
    color: inherit;
    text-decoration: none;
}

svg {
    display: block;
    flex: none;
}

small {
    font-size: 4px;
    line-height: 4px;
}

.sprite {
    position: absolute;
    width: 0;
    height: 0;
}

.ic {
    width: 8px;
    height: 8px;
}

.app {
    height: 100%;
    display: flex;
    flex-direction: column;
    background: #ececee;
}

/* title bar */
.titlebar {
    display: grid;
    grid-template-columns: 309fr 319fr 29fr 100fr;
    height: 9px;
    background: #f7f7f7;
}

.titlebar h1 {
    font-size: 6px;
    font-weight: normal;
    line-height: 7px;
}

.quick {
    display: flex;
    gap: 3px;
    line-height: 6px;
}

.quick .ic {
    height: 7px;
}

.context {
    background: #f3a384;
    color: #fff;
    font-weight: bold;
    text-align: center;
    line-height: 7px;
}

.win-btns {
    display: flex;
    justify-content: flex-end;
    gap: 16px;
    padding-right: 6px;
    color: #aaa;
}

/* ribbon tabs */
.tabs {
    display: grid;
    grid-template-columns: 27fr 33fr 47fr 78fr 68fr 70fr 64fr 80fr 56fr 52fr 53fr 29fr 66fr 34fr;
    height: 11px;
    line-height: 11px;
    background: #262626;
    color: #e4e4e4;
    text-align: center;
    white-space: nowrap;
}

.tabs .file {
    background: #fdb913;
    color: #5b3c00;
}

.tabs .active {
    background: #fafafa;
    color: #222;
}

.tabs .red {
    background: #642b2e;
}

.stamp b {
    font: 6px/7px "Noto Sans CJK SC", sans-serif;
    background: #f2f2f2;
    color: #111;
}

.tab-end {
    display: flex;
    justify-content: flex-end;
    align-items: center;
    gap: 6px;
    font-size: 5px;
}

.tab-end i {
    width: 7px;
    line-height: 7px;
    border-radius: 4px;
    background: #1ab0cc;
}

/* ribbon */
.ribbon {
    display: grid;
    grid-template-columns: 41fr 213fr 44fr 48fr 100fr 77fr 72fr 122fr 40fr;
    height: 43px;
    background: #fafafa;
    border-bottom: 1px solid #999;
}

.group {
    display: flex;
    flex-direction: column;
    min-width: 0;
    border-right: 1px solid #d0d0d4;
}

.group h2 {
    height: 8px;
    background: #efeff2;
    font-size: 6px;
    font-weight: normal;
    line-height: 8px;
    text-align: center;
}

.tools {
    flex: 1;
    display: flex;
    justify-content: space-around;
    white-space: nowrap;
}

.big {
    display: flex;
    flex-direction: column;
    align-items: center;
    padding-top: 2px;
    line-height: 7px;
}

.big svg {
    width: 15px;
    height: 15px;
    margin-bottom: 2px;
}

.big small {
    margin-top: 1px;
}

.big.on {
    padding: 1px 2px 0;
    background: linear-gradient(#f9d64c, #fdee8e);
    border: 1px solid #e2b93b;
}

.list {
    display: flex;
    flex-direction: column;
    gap: 3px;
    padding-top: 2px;
}

.list button {
    display: flex;
    align-items: center;
    gap: 3px;
    height: 8px;
}

.list svg {
    width: 8px;
    height: 8px;
}

.dim {
    color: #888;
}

/* work area */
.work {
    flex: 1;
    display: flex;
    min-height: 0;
    border-top: 1px solid #666;
    font-family: "Liberation Mono", monospace;
    font-size: 5px;
}

.side {
    width: 8px;
    display: flex;
    flex-direction: column;
    gap: 1px;
}

.side a {
    display: flex;
    align-items: center;
    gap: 1px;
    width: 7px;
    padding-bottom: 1px;
    writing-mode: vertical-rl;
    background: #f3f3f3;
    border: 1px solid #ccc;
    border-left: none;
}

.side .ic {
    width: 7px;
}

.panels {
    width: 119px;
    display: flex;
    flex-direction: column;
    border-right: 1px solid #aaa;
}

.panel {
    display: flex;
    flex-direction: column;
}

.input {
    flex: 232;
}

.models {
    flex: 166;
}

.panel h3 {
    display: flex;
    align-items: center;
    gap: 2px;
    height: 13px;
    padding: 0 3px;
    background: #f7f7f7;
    font-size: 5px;
    border-bottom: 1px solid #aaa;
}

.panel h3 span {
    display: flex;
    gap: 4px;
    margin-left: auto;
}

.panel h3 span svg {
    width: 5px;
    height: 5px;
}

.box {
    flex: 1;
    background: #fcfcfc;
    border: 1px solid #aaa;
    border-top: none;
}

.tree {
    display: grid;
    grid-auto-rows: 1fr;
    height: 189px;
    list-style: none;
}

.tree li {
    display: flex;
    align-items: center;
    gap: 2px;
    padding-left: 11px;
}

.tree .root {
    padding-left: 2px;
}

.tree i {
    width: 4px;
    font-size: 4px;
    font-style: normal;
    color: #888;
}

.tree .root i {
    color: #222;
}

.tree label {
    display: flex;
    align-items: center;
    gap: 2px;
    font-weight: bold;
}

.tree b {
    background: #bcb8f0;
}

.tree .it {
    font-style: italic;
    font-weight: bold;
}

.tree .it span {
    margin-left: 9px;
}

.tree input {
    appearance: none;
    position: relative;
    width: 7px;
    height: 7px;
    border: 1px solid #777;
    background: #fff;
}

.tree input:checked::after {
    content: "";
    position: absolute;
    left: 2px;
    top: 0;
    width: 2px;
    height: 4px;
    border: solid #4a1a6b;
    border-width: 0 1px 1px 0;
    transform: rotate(40deg);
}

.cyan { color: #2796b8; }
.aqua { color: #45c4c8; }
.lime { color: #c5c92e; }
.gold { color: #d8a91d; }
.orchid { color: #d765d2; }
.violet { color: #8d7cc9; }
.mint { color: #48c48f; }
.khaki { color: #b5b56a; }
.pink { color: #d98abf; }
.magenta { color: #a5128f; }
.navy { color: #1d2a7c; }
.green { color: #38a14a; }
.olive { color: #b5a41a; }

.foot {
    display: flex;
    height: 11px;
}

.foot a {
    display: flex;
    align-items: center;
    gap: 1px;
    padding: 0 1px;
    border: 1px solid #bbb;
    border-top: none;
    color: #555;
}

.foot .active {
    background: #fcfcfc;
    color: #222;
}

/* 2D view */
.view {
    flex: 1;
    display: flex;
    flex-direction: column;
    margin-left: 1px;
    border-left: 1px solid #444;
}

.view-tabs {
    height: 11px;
    background: #646464;
}

.view-tabs a {
    display: flex;
    align-items: center;
    gap: 1px;
    width: 73px;
    height: 10px;
    padding: 0 4px 0 1px;
    background: #f9bd34;
    color: #5b4a1c;
}

.view-tabs em {
    font-style: normal;
    background: #2f93a5;
    color: #fff;
}

.view-tabs svg {
    width: 5px;
    height: 5px;
    margin-left: auto;
}

.canvas {
    flex: 1;
    position: relative;
    background: #000;
    font-family: Lato, sans-serif;
    font-size: 6px;
}

.map {
    position: absolute;
    width: 100%;
    height: 100%;
}

.toolbar {
    position: absolute;
    left: 162px;
    top: 0;
    width: 305px;
    height: 12px;
    display: flex;
    align-items: center;
    justify-content: space-between;
    background: #f0f0f0;
}

.toolbar button {
    display: flex;
    align-items: center;
    height: 12px;
    padding: 0 1px;
}

.toolbar button svg {
    width: 8px;
    height: 8px;
}

.toolbar .on {
    background: #fbe27a;
    border: 1px solid #d9b53c;
}

.toolbar .last {
    padding: 0 4px;
}

.toolbar .last svg {
    width: 5px;
}

.toolbar hr {
    width: 1px;
    height: 7px;
    border: none;
    background: #999;
}

.combo {
    position: relative;
    background: #fff;
}

.combo select {
    appearance: none;
    width: 25px;
    height: 10px;
    padding-left: 2px;
}

.combo .short {
    width: 19px;
}

.combo::after {
    content: "▼";
    position: absolute;
    right: 1px;
    top: 2px;
    font-size: 4px;
    pointer-events: none;
}

.scale {
    position: absolute;
    left: 9px;
    bottom: 8px;
    width: 101px;
    font: 9px/11px "Liberation Sans", sans-serif;
    color: #eee;
}

.scale p {
    padding-left: 9px;
}

.bar {
    height: 11px;
    margin: -7px 0 8px;
    border: 2px solid #bbb;
    border-top: none;
    border-bottom: 3px double #ccc;
}

.north {
    position: absolute;
    right: 21px;
    bottom: 0;
    width: 18px;
    height: 38px;
}

/* dialog */
.dialog {
    position: absolute;
    left: 173px;
    top: 103px;
    width: 243px;
    height: 232px;
    display: flex;
    flex-direction: column;
    padding: 0 1px;
    background: #f8f9fa;
    border: 1px solid #3d98a8;
}

.dialog header {
    display: flex;
    align-items: center;
    gap: 3px;
    height: 13px;
    padding: 0 3px 0 2px;
}

.dialog h4 {
    flex: 1;
    font-size: 6px;
    font-weight: normal;
}

.dialog header button svg {
    width: 6px;
    height: 6px;
}

.help {
    display: flex;
    justify-content: flex-end;
    height: 13px;
    padding-top: 2px;
}

.help button {
    width: 10px;
    height: 9px;
    background: linear-gradient(#a9d4f5, #4a93d6);
    border: 1px solid #6aa5d8;
    border-radius: 1px;
    color: #fff;
    font-weight: bold;
    line-height: 7px;
}

.grid {
    flex: 1;
    border: 1px solid #7d959e;
}

.grid table {
    width: 140px;
    height: 136px;
    table-layout: fixed;
    border-collapse: collapse;
}

.grid th, .grid td {
    border-right: 1px solid #ccc;
    border-bottom: 1px solid #ccc;
    line-height: 8px;
    text-align: left;
    padding-left: 1px;
}

.grid thead th {
    text-align: center;
}

.grid th:nth-child(1) { width: 15px; }
.grid th:nth-child(2) { width: 62px; }

.grid td:last-child {
    position: relative;
}

.grid td:last-child::after {
    content: "▼";
    position: absolute;
    right: 1px;
    top: 1px;
    font-size: 5px;
    line-height: 8px;
    pointer-events: none;
}

.grid select {
    appearance: none;
    display: block;
    width: 100%;
    height: 8px;
    text-align: center;
    text-align-last: center;
}

.dialog footer {
    display: flex;
    justify-content: flex-end;
    gap: 4px;
    height: 14px;
    padding-top: 3px;
}

.dialog footer button {
    display: flex;
    align-items: center;
    gap: 2px;
    width: 35px;
    height: 10px;
    padding-left: 2px;
    background: #ececec;
    border: 1px solid #ccc;
    font: 5px/7px "Liberation Mono", monospace;
}

.dialog footer .ok {
    border-color: #2a8fb5;
}

.dialog footer svg {
    width: 7px;
    height: 7px;
}

.pointer {
    position: absolute;
    left: 131px;
    top: 33px;
    width: 16px;
    height: 18px;
}

/* status bar */
.status {
    display: flex;
    justify-content: flex-end;
    gap: 1px;
    height: 6px;
    background: #e6e6e8;
    border-top: 1px solid #aaa;
    font-size: 5px;
    line-height: 5px;
}

.status b {
    width: 9px;
    background: #555;
}

.status i {
    width: 8px;
    margin-left: 1px;
    border-radius: 4px 4px 0 0;
    background: #1fa5bb;
}
```
